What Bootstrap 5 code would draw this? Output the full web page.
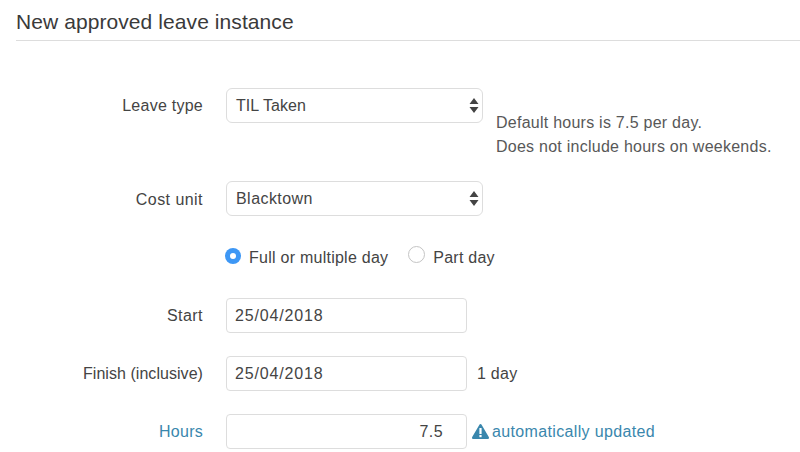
<!DOCTYPE html>
<html lang="en"><head><meta charset="utf-8"><title>Leave</title>
<link rel="stylesheet" href="https://cdn.jsdelivr.net/npm/bootstrap@5.3.0/dist/css/bootstrap.min.css">
<style>
html,body{height:452px;overflow:hidden;background:#fff}
body{font-family:"Liberation Sans",Arial,sans-serif;font-size:16px;color:#444;letter-spacing:.25px}
.pagehead{margin-left:16px;height:41px;border-bottom:1px solid #ddd;font-size:21px;line-height:24px;padding-top:10px;color:#3a3a3a;letter-spacing:.08px}
.formrows{padding-top:47px}
.lbl{width:203px;text-align:right;flex:none}
.fieldcol{margin-left:23px}
.picker{width:257px;height:35px;flex:none;border:1px solid #ddd;border-radius:6px;background:#fff;padding-left:9px;display:flex;align-items:center;justify-content:space-between}
.arrows{width:10px;margin-right:3px;display:block}
.txtbox{width:241px;height:35px;flex:none;border:1px solid #ddd;border-radius:4px;padding:0 8px;display:flex;align-items:center}
.numbox{justify-content:flex-end;padding-right:23px;letter-spacing:.4px}
.datetxt{letter-spacing:.85px}
.hintblock{margin-left:13px;line-height:24px;padding-top:23px;color:#585858}
.accent{color:#3a87ad}
.lbl-a{height:35px;line-height:36px}
.rowa{height:35px}
.radiorow{height:24px}
.circ{width:17px;height:17px;border-radius:50%;flex:none;margin-top:-5px}
.circ-on{background:#3d97f5;display:flex;align-items:center;justify-content:center;margin-left:1px;width:16px;height:16px}
.circ-on i{display:block;width:6px;height:6px;background:#fff;border-radius:50%}
.circ-off{border:1px solid #c4c4c4;background:#fff;margin-top:-7px}
.gap-label{margin-left:8px}
.gap-next{margin-right:20px}
.r2{margin-top:22px}.r3{margin-top:30px;padding-left:224px}.r4{margin-top:28px}.r5{margin-top:23px}
.tail{margin-left:10px}
.warn{margin-left:5px;letter-spacing:.35px}
.warn svg{margin-right:3px}
.tight{letter-spacing:.05px}
.wide{letter-spacing:.45px}
.nudge{padding-top:1px}
</style></head><body>
<div class="pagehead">New approved leave instance</div>
<div class="formrows">
 <div class="d-flex align-items-start">
  <div class="lbl lbl-a">Leave type</div>
  <div class="fieldcol picker"><span class="tight">TIL Taken</span><svg class="arrows" viewBox="0 0 10 15" height="15"><path d="M5 0 9.5 6H.5zM5 15 .5 9h9z" fill="#444"/></svg></div>
  <div class="hintblock text-nowrap">Default hours is 7.5 per day.<br>Does not include hours on weekends.</div>
 </div>
 <div class="d-flex align-items-start rowa r2">
  <div class="lbl lbl-a wide nudge">Cost unit</div>
  <div class="fieldcol picker"><span class="wide nudge">Blacktown</span><svg class="arrows" viewBox="0 0 10 15" height="15"><path d="M5 0 9.5 6H.5zM5 15 .5 9h9z" fill="#444"/></svg></div>
 </div>
 <div class="d-flex align-items-center radiorow r3">
  <span class="circ circ-on"><i></i></span><span class="gap-label gap-next">Full or multiple day</span>
  <span class="circ circ-off"></span><span class="gap-label">Part day</span>
 </div>
 <div class="d-flex rowa r4">
  <div class="lbl lbl-a wide">Start</div>
  <div class="fieldcol txtbox datetxt">25/04/2018</div>
 </div>
 <div class="d-flex rowa r5">
  <div class="lbl lbl-a tight">Finish (inclusive)</div>
  <div class="fieldcol txtbox datetxt">25/04/2018</div>
  <div class="align-self-center tail">1 day</div>
 </div>
 <div class="d-flex rowa r5">
  <div class="lbl lbl-a accent">Hours</div>
  <div class="fieldcol txtbox numbox">7.5</div>
  <div class="align-self-center accent d-flex align-items-center warn"><svg width="17" height="15" viewBox="0 0 17 15"><path d="M8.5 0c.5 0 .9.3 1.1.7l7.2 12.4c.5.8-.1 1.9-1.1 1.9H1.3C.3 15-.3 13.9.2 13.1L7.4.7C7.6.3 8 0 8.5 0z" fill="#3a87ad"/><rect x="7.4" y="4" width="2.2" height="6" fill="#fff"/><rect x="7.4" y="11" width="2.2" height="2.2" fill="#fff"/></svg>automatically updated</div>
 </div>
</div>
</body></html>
